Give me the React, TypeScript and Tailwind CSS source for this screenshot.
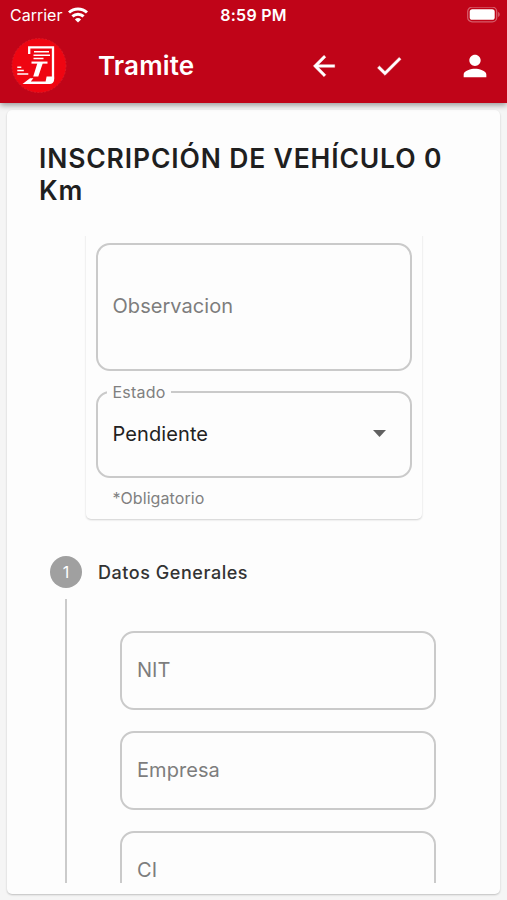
import * as React from 'react'

function WifiIcon(): React.JSX.Element {
  return (
    <svg className="h-4 w-5" viewBox="0 0 20 16" fill="none" stroke="currentColor" strokeWidth={3}>
      <path d="M1 5.5a13 13 0 0118 0" />
      <path d="M4.4 9.4a8.2 8.2 0 0111.2 0" />
      <path d="M10 15.4L6.9 12.4a4.6 4.6 0 016.2 0z" fill="currentColor" stroke="none" />
    </svg>
  )
}

function BatteryIcon(): React.JSX.Element {
  return (
    <svg className="h-4 w-[34px]" viewBox="0 0 34 16" fill="none">
      <rect x="0.7" y="0.2" width="29" height="14.6" rx="4.4" stroke="#fff" strokeOpacity={0.35} strokeWidth={1.3} />
      <rect x="2.7" y="2.2" width="25" height="10.6" rx="2.6" fill="#fff" />
      <path d="M31.2 5.1c1.9.6 1.9 4.2 0 4.8z" fill="#fff" fillOpacity={0.4} />
    </svg>
  )
}

function Logo(): React.JSX.Element {
  return (
    <svg className="h-14 w-14" viewBox="0 0 56 56">
      <circle cx="28" cy="27.5" r="27" fill="#ef0511" stroke="#dc1f2b" strokeWidth={0.8} strokeDasharray="2 1.5" />
      <g fill="none" stroke="#fff">
        <path d="M18.2 16V9.3H42V41" strokeWidth={2.3} />
        <path d="M23 13.7h15M22.5 17.2h16.5M22.5 20.6h10" strokeWidth={1.5} />
        <path d="M20.5 24.6h16" strokeWidth={2.1} />
        <path d="M6.3 29.3h4M6.3 32.6h6.5M6.3 36h11" strokeWidth={1.5} />
      </g>
      <path d="M26.6 24.6h5.4L27.3 38.4h-5.1z" fill="#fff" />
      <path d="M11.5 46L19 40.2h3.4L19.8 43.4h14.8l1-4.8h7.5v3.4c-.3 2.6-2 4-4.5 4z" fill="#fff" />
    </svg>
  )
}

function BackIcon(): React.JSX.Element {
  return (
    <svg className="h-8 w-8" viewBox="0 0 24 24" fill="currentColor" stroke="currentColor" strokeWidth={0.3}>
      <path d="M20 11H7.83l5.59-5.59L12 4l-8 8 8 8 1.41-1.41L7.83 13H20v-2z" />
    </svg>
  )
}

function CheckIcon(): React.JSX.Element {
  return (
    <svg className="h-8 w-8" viewBox="0 0 24 24" fill="currentColor" stroke="currentColor" strokeWidth={0.4}>
      <path d="M9 16.17L4.83 12l-1.42 1.41L9 19 21 7l-1.41-1.41z" />
    </svg>
  )
}

function PersonIcon(): React.JSX.Element {
  return (
    <svg className="h-[34px] w-[34px]" viewBox="0 0 24 24" fill="currentColor">
      <path d="M12 12c2.21 0 4-1.79 4-4s-1.79-4-4-4-4 1.79-4 4 1.79 4 4 4zm0 2c-2.67 0-8 1.34-8 4v2h16v-2c0-2.66-5.33-4-8-4z" />
    </svg>
  )
}

function StatusBar(): React.JSX.Element {
  return (
    <div className="grid h-[30px] grid-cols-3 items-center pr-[6px] pl-[10px] text-base">
      <div className="flex items-center gap-[6px]">
        <span>Carrier</span>
        <WifiIcon />
      </div>
      <span className="pr-1 text-center font-semibold tracking-[0.25px]">8:59 PM</span>
      <div className="flex justify-end">
        <BatteryIcon />
      </div>
    </div>
  )
}

function AppBar(): React.JSX.Element {
  return (
    <header className="relative z-10 h-[103px] shrink-0 bg-[#c00418] text-white shadow-[0_2px_6px_rgba(0,0,0,0.4)]">
      <StatusBar />
      <div className="flex h-[72px] items-center pr-[15px] pl-[11px]">
        <Logo />
        <h1 className="ml-[31px] flex-1 pb-px text-[26px] font-semibold tracking-[0.15px]">Tramite</h1>
        <button className="mr-[33px]">
          <BackIcon />
        </button>
        <button className="mr-[53px]">
          <CheckIcon />
        </button>
        <button>
          <PersonIcon />
        </button>
      </div>
    </header>
  )
}

function TextField({ label, className }: { label: string; className: string }): React.JSX.Element {
  return (
    <div
      className={`flex shrink-0 items-center rounded-[14px] border-2 border-[#cacaca] px-[15px] pb-[2px] text-xl tracking-[0.05px] text-[#7d7d7d] ${className}`}
    >
      {label}
    </div>
  )
}

function SelectField(): React.JSX.Element {
  return (
    <fieldset className="mt-3 h-[95px] rounded-[14px] border-2 border-[#cacaca] pr-[24px] pl-[9px]">
      <legend className="h-[18px] px-[5px] text-base leading-[18px] tracking-[0.2px] text-[#808080]">
        <span className="mr-px ml-px">Estado</span>
      </legend>
      <div className="flex h-[65px] items-center justify-between pl-[6px] text-xl tracking-[0.1px] text-[#222]">
        Pendiente
        <svg className="h-[7px] w-[13px]" viewBox="0 0 13 7" fill="#616161">
          <path d="M0 0h13L6.5 7z" />
        </svg>
      </div>
    </fieldset>
  )
}

const generalFields = ['NIT', 'Empresa', 'CI']

export default function App(): React.JSX.Element {
  return (
    <div className="flex h-[900px] w-[507px] flex-col overflow-hidden bg-[#f5f5f5] font-['Inter',sans-serif]">
      <AppBar />

      <main className="mx-[7px] mt-[7px] mb-[6px] flex min-h-0 flex-1 flex-col rounded-[5px] bg-[#fdfdfd] pb-[11px] shadow-[0_1px_2px_rgba(0,0,0,0.22)]">
        <h2 className="mt-8 mr-6 ml-8 text-[26.5px] leading-[32px] font-semibold tracking-[0.85px] text-[#1f1f1f]">
          INSCRIPCIÓN DE VEHÍCULO 0 Km
        </h2>

        {/* scroll area, clipped at both ends */}
        <div className="mt-[30px] flex min-h-0 flex-1 flex-col overflow-hidden">
          <section className="mx-auto -mt-2 h-[291px] w-[336px] shrink-0 rounded-[5px] px-[10px] pt-[15px] shadow-[0_1px_2px_rgba(0,0,0,0.18)]">
            <TextField label="Observacion" className="h-[128px]" />
            <SelectField />
            <p className="mt-[10px] ml-[17px] text-base leading-5 tracking-[0.1px] text-[#808080]">*Obligatorio</p>
          </section>

          <div className="mt-[37px] ml-[43px] flex shrink-0 items-center gap-4">
            <span className="flex h-8 w-8 items-center justify-center rounded-full bg-[#a0a0a0] text-base text-white">1</span>
            <h3 className="pt-px text-lg font-medium tracking-[0.55px] text-[#333]">Datos Generales</h3>
          </div>

          <div className="mt-[11px] ml-[58px] flex min-h-0 flex-1">
            <div className="w-[2px] bg-[#cbcbcb]" />
            <div className="ml-[53px] flex w-[316px] flex-col gap-[21px] overflow-hidden pt-8">
              {generalFields.map((label) => (
                <TextField key={label} label={label} className="h-[79px]" />
              ))}
            </div>
          </div>
        </div>
      </main>
    </div>
  )
}
